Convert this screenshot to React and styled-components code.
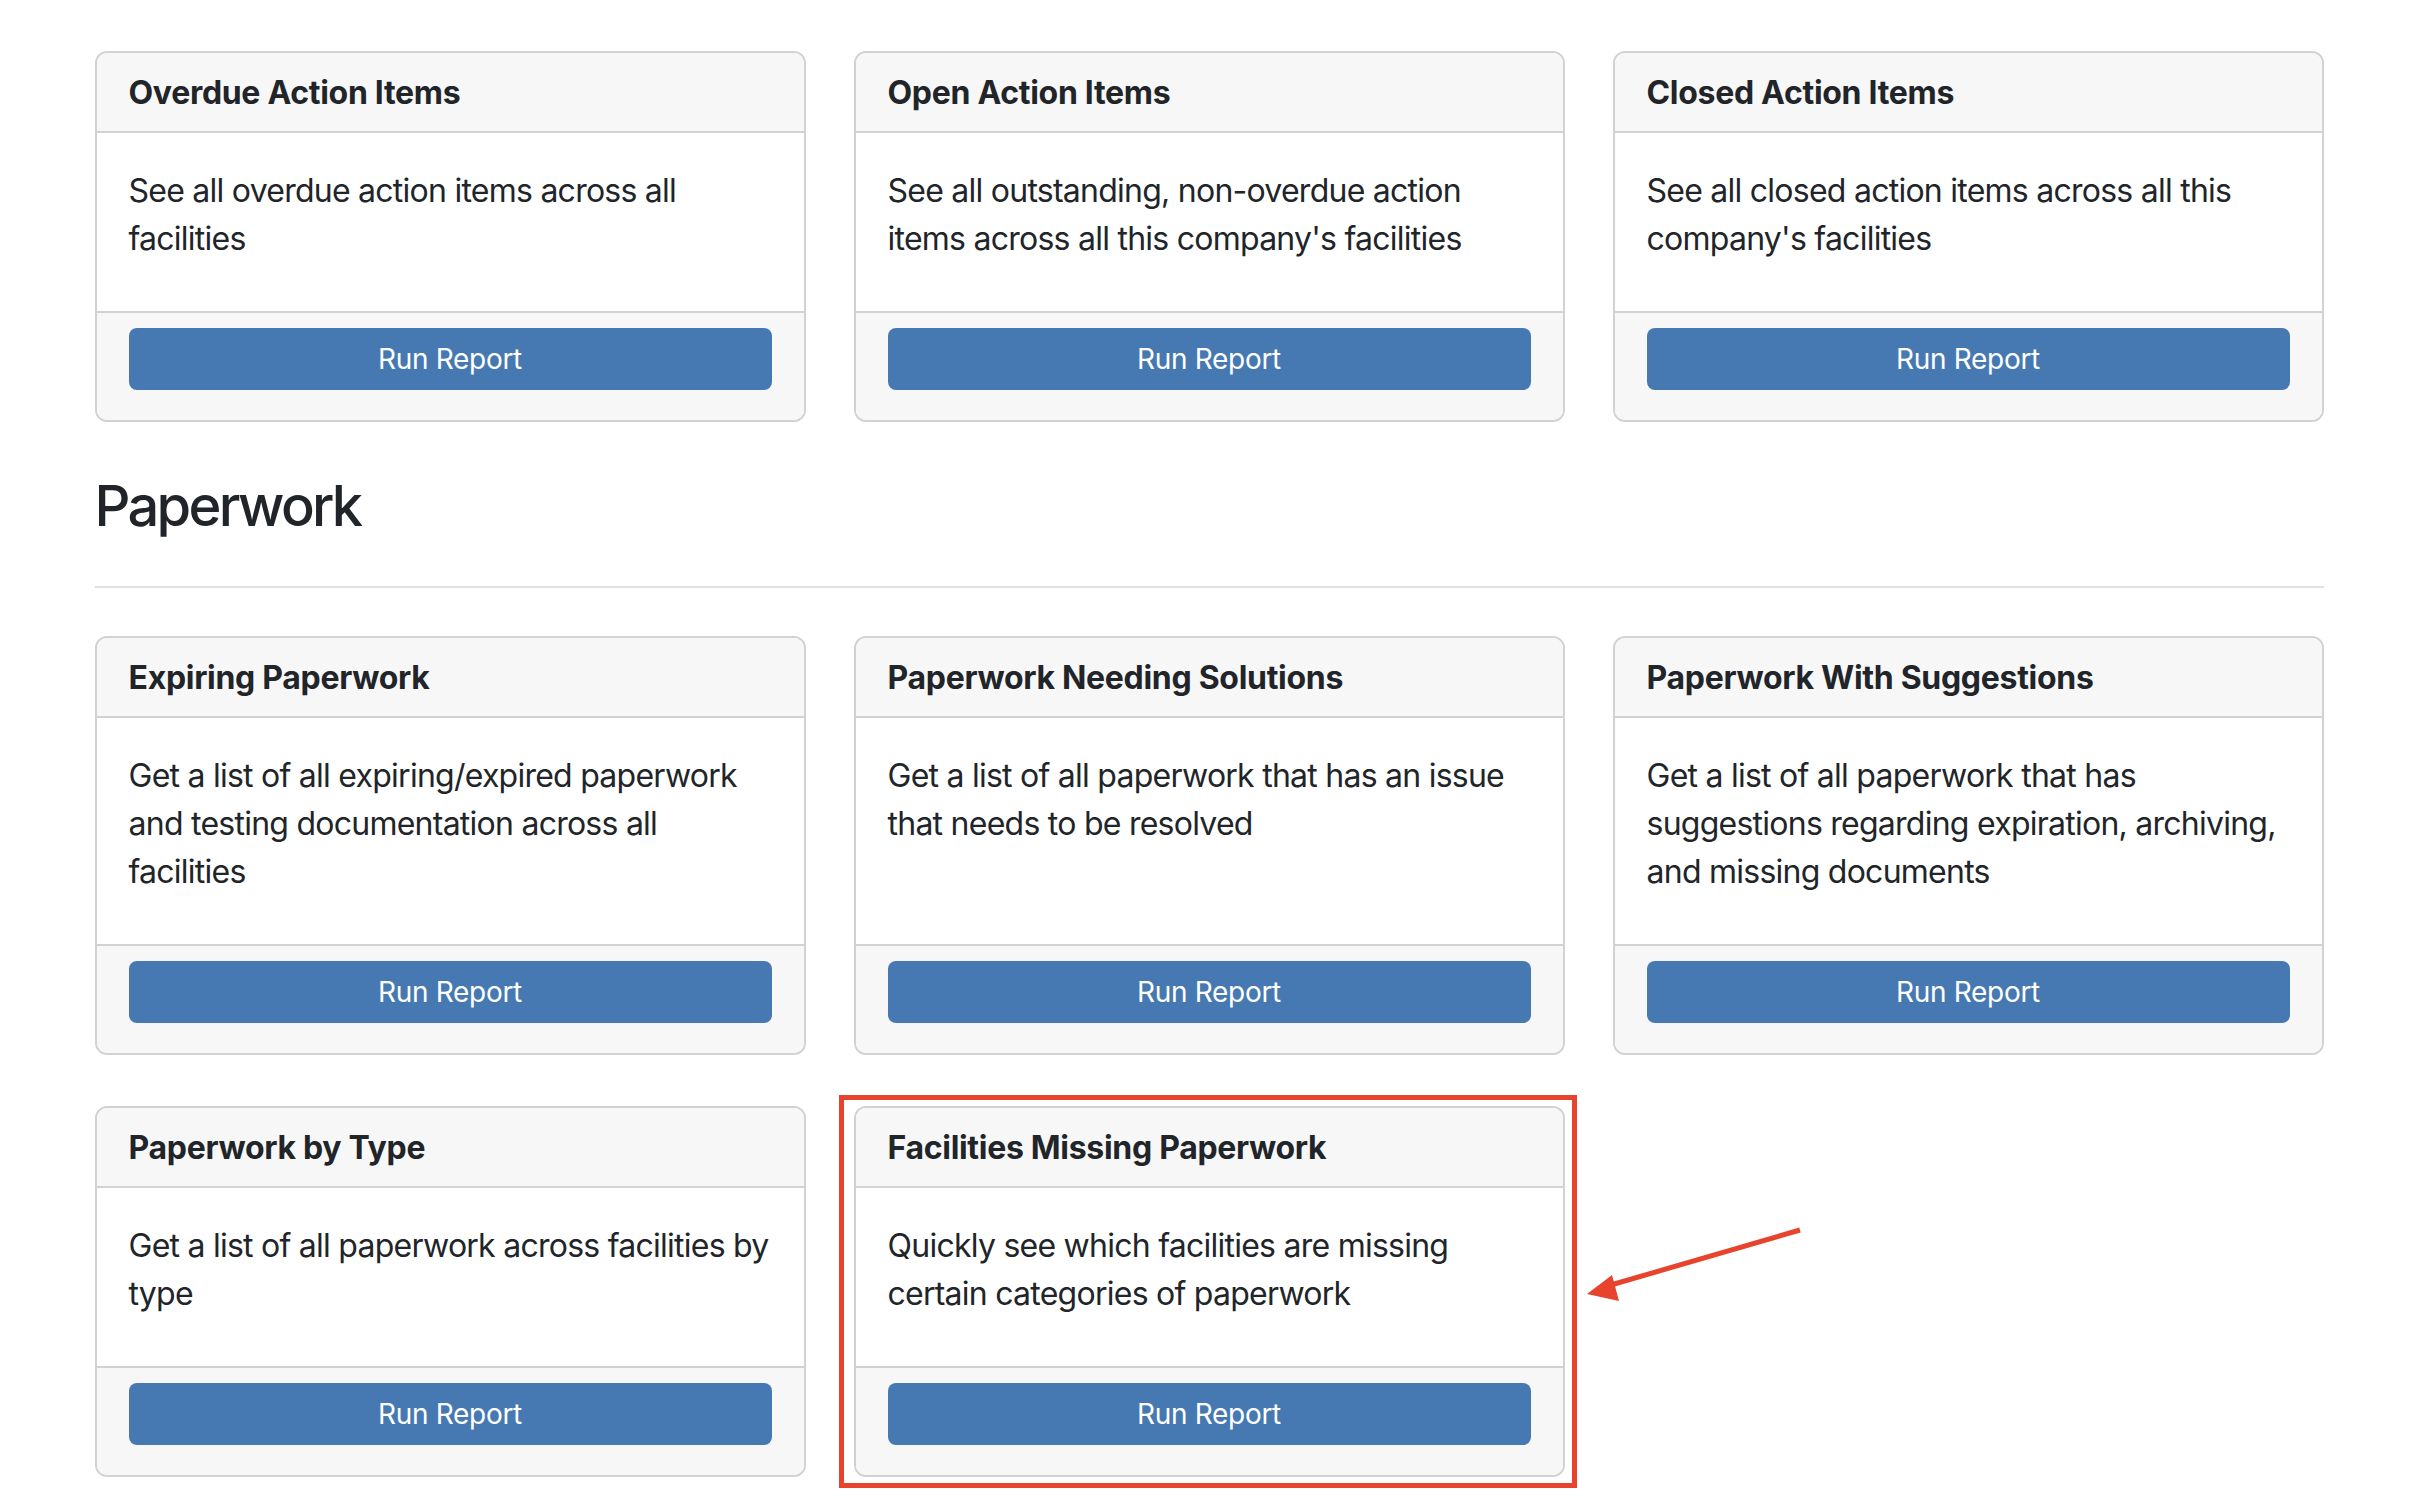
import React from "react";
import styled, { createGlobalStyle } from "styled-components";

const GlobalStyle = createGlobalStyle`
  html, body { margin: 0; padding: 0; background: #ffffff; }
  body {
    font-family: Inter, "Noto Sans", "Liberation Sans", sans-serif;
    color: #212529;
    -webkit-font-smoothing: antialiased;
  }
  * { box-sizing: border-box; }
`;

const Page = styled.div`
  width: 2229px;
  margin: 0 auto;
  padding: 51px 0 40px;
`;

const CardGrid = styled.div`
  display: grid;
  grid-template-columns: repeat(3, 711px);
  column-gap: 48px;
  row-gap: 51px;
`;

const SectionTitle = styled.h3`
  margin: 51px 0 0;
  font-size: 56px;
  line-height: 1.2;
  font-weight: 500;
  letter-spacing: -2.7px;
  color: #212529;
`;

const Divider = styled.hr`
  margin: 46px 0 48px;
  border: 0;
  height: 2px;
  background: #dee2e6;
`;

const Card = styled.div`
  display: flex;
  flex-direction: column;
  border: 2px solid #d2d2d2;
  border-radius: 12px;
  background: #ffffff;
  overflow: hidden;
  height: 100%;
`;

const CardHeader = styled.div`
  padding: 16px 32px 14px;
  background: #f7f7f7;
  border-bottom: 2px solid #d2d2d2;
  font-size: 32px;
  line-height: 48px;
  font-weight: 700;
  letter-spacing: -0.3px;
`;

const CardBody = styled.div`
  flex: 1;
  padding: 34px 32px 48px;
  font-size: 32px;
  line-height: 48px;
  font-weight: 400;
  letter-spacing: -0.75px;
`;

const CardFooter = styled.div`
  padding: 15px 32px 30px;
  background: #f7f7f7;
  border-top: 2px solid #d2d2d2;
`;

const RunButton = styled.button`
  display: block;
  width: 100%;
  height: 62px;
  border: 0;
  border-radius: 8px;
  background: #4679b2;
  color: #ffffff;
  font-family: inherit;
  font-size: 28px;
  line-height: 42px;
  font-weight: 400;
  letter-spacing: -0.3px;
  cursor: pointer;
`;

const Highlight = styled.div`
  position: relative;
  height: 100%;

  &::after {
    content: "";
    position: absolute;
    top: -11px;
    bottom: -11px;
    left: -15px;
    right: -12px;
    border: 5px solid #e8432d;
    pointer-events: none;
  }
`;

const Arrow = styled.svg`
  position: absolute;
  left: 730px;
  top: 120px;
  width: 230px;
  height: 80px;
  overflow: visible;
  pointer-events: none;
`;

const ReportCard = ({ title, text }) => (
  <Card>
    <CardHeader>{title}</CardHeader>
    <CardBody>{text}</CardBody>
    <CardFooter>
      <RunButton type="button">Run Report</RunButton>
    </CardFooter>
  </Card>
);

const actionItems = [
  {
    title: "Overdue Action Items",
    text: "See all overdue action items across all facilities",
  },
  {
    title: "Open Action Items",
    text: "See all outstanding, non-overdue action items across all this company's facilities",
  },
  {
    title: "Closed Action Items",
    text: "See all closed action items across all this company's facilities",
  },
];

const paperwork = [
  {
    title: "Expiring Paperwork",
    text: "Get a list of all expiring/expired paperwork and testing documentation across all facilities",
  },
  {
    title: "Paperwork Needing Solutions",
    text: "Get a list of all paperwork that has an issue that needs to be resolved",
  },
  {
    title: "Paperwork With Suggestions",
    text: "Get a list of all paperwork that has suggestions regarding expiration, archiving, and missing documents",
  },
  {
    title: "Paperwork by Type",
    text: "Get a list of all paperwork across facilities by type",
  },
  {
    title: "Facilities Missing Paperwork",
    text: "Quickly see which facilities are missing certain categories of paperwork",
    highlight: true,
  },
];

export default function App() {
  return (
    <>
      <GlobalStyle />
      <Page>
        <CardGrid>
          {actionItems.map((c) => (
            <ReportCard key={c.title} title={c.title} text={c.text} />
          ))}
        </CardGrid>

        <SectionTitle>Paperwork</SectionTitle>
        <Divider />

        <CardGrid>
          {paperwork.map((c) =>
            c.highlight ? (
              <Highlight key={c.title}>
                <ReportCard title={c.title} text={c.text} />
                <Arrow viewBox="0 0 230 80">
                  <line
                    x1="216"
                    y1="4"
                    x2="20"
                    y2="61"
                    stroke="#e8432d"
                    strokeWidth="5"
                    strokeLinecap="butt"
                  />
                  <polygon points="3,68 28,49 35,75" fill="#e8432d" />
                </Arrow>
              </Highlight>
            ) : (
              <ReportCard key={c.title} title={c.title} text={c.text} />
            )
          )}
        </CardGrid>
      </Page>
    </>
  );
}
